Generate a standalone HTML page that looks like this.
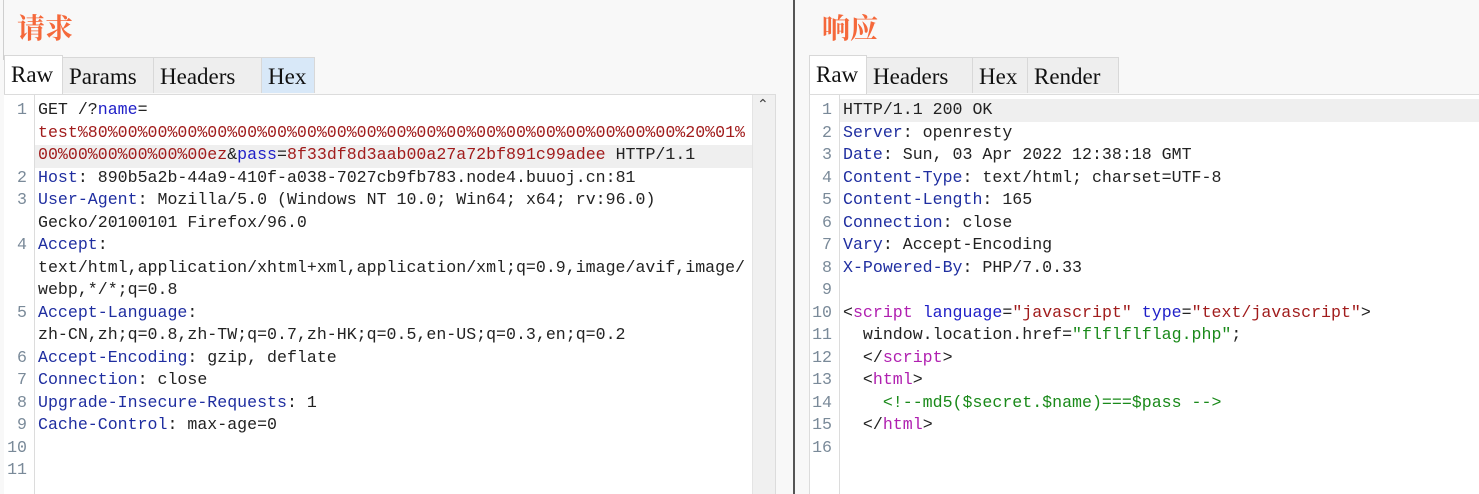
<!DOCTYPE html>
<html><head><meta charset="utf-8"><style>
*{margin:0;padding:0;box-sizing:border-box}
body{width:1479px;height:494px;background:#f8f8f8;position:relative;overflow:hidden;font-family:"Liberation Mono","Noto Sans CJK SC",monospace}
.abs{position:absolute}
.title{font-family:"Noto Serif CJK SC","Liberation Serif",serif;color:#f5683a;font-size:28px;line-height:30px;font-weight:bold}
.tab{position:absolute;top:57px;height:36px;border:1px solid #d8d8d8;border-bottom:none;background:#eeeeee;font-family:"Liberation Serif","Noto Serif CJK SC",serif;font-size:23px;line-height:38px;padding:0 6px;color:#111}
.tab.sel{background:#fff;top:55px;height:40px;line-height:38px}
.ed{position:absolute;background:#fff;border-top:1px solid #dcdcdc}
.ln{position:absolute;height:22.5px;font-size:16.6px;line-height:22.5px;white-space:pre;color:#222}
.num{position:absolute;font-size:16.6px;line-height:22.5px;color:#7a8a99;text-align:right;width:22px}
.k{color:#1f2ea0}.r{color:#a11c1c}.t{color:#b020b0}.a{color:#2020c8}.s{color:#a11c1c}.g{color:#1a8a1a}
</style></head><body>
<div class="abs" style="left:3px;top:0;width:1px;height:60px;background:#cfcfcf"></div>
<div class="abs title" style="left:17px;top:12px">请求</div>
<div class="abs title" style="left:822px;top:12px">响应</div>
<div class="abs" style="left:793px;top:0;width:2px;height:494px;background:#555"></div>

<div class="tab" style="left:62px;width:92px">Params</div>
<div class="tab" style="left:153px;width:109px">Headers</div>
<div class="tab" style="left:261px;width:54px;background:#d8e8f8">Hex</div>
<div class="tab sel" style="left:4px;width:59px;">Raw</div>

<div class="ed" style="left:4px;top:94px;width:772px;height:400px;border-right:1px solid #dcdcdc"></div>
<div class="abs" style="left:752px;top:95px;width:23px;height:399px;background:#f0f0f0;border-left:1px solid #e4e4e4"></div>
<div class="abs" style="left:757px;top:97px;font-size:14px;color:#444;font-family:'DejaVu Sans',sans-serif">&#8963;</div>
<div class="abs" style="left:34px;top:95px;width:1px;height:399px;background:#dcdcdc"></div>
<div class="abs" style="left:35px;top:145px;width:717px;height:22.5px;background:#efefef"></div>

<div class="num" style="left:5px;top:99px">1</div>
<div class="num" style="left:5px;top:166.5px">2</div>
<div class="num" style="left:5px;top:189px">3</div>
<div class="num" style="left:5px;top:234px">4</div>
<div class="num" style="left:5px;top:301.5px">5</div>
<div class="num" style="left:5px;top:346.5px">6</div>
<div class="num" style="left:5px;top:369px">7</div>
<div class="num" style="left:5px;top:391.5px">8</div>
<div class="num" style="left:5px;top:414px">9</div>
<div class="num" style="left:5px;top:436.5px">10</div>
<div class="num" style="left:5px;top:459px">11</div>

<div class="ln" style="left:38px;top:99px">GET /?<span class="a">name</span>=</div>
<div class="ln r" style="left:38px;top:121.5px">test%80%00%00%00%00%00%00%00%00%00%00%00%00%00%00%00%00%00%00%00%20%01%</div>
<div class="ln" style="left:38px;top:144px"><span class="r">00%00%00%00%00%00ez</span>&amp;<span class="a">pass</span>=<span class="r">8f33df8d3aab00a27a72bf891c99adee</span> HTTP/1.1</div>
<div class="ln" style="left:38px;top:166.5px"><span class="k">Host</span>: 890b5a2b-44a9-410f-a038-7027cb9fb783.node4.buuoj.cn:81</div>
<div class="ln" style="left:38px;top:189px"><span class="k">User-Agent</span>: Mozilla/5.0 (Windows NT 10.0; Win64; x64; rv:96.0)</div>
<div class="ln" style="left:38px;top:211.5px">Gecko/20100101 Firefox/96.0</div>
<div class="ln" style="left:38px;top:234px"><span class="k">Accept</span>:</div>
<div class="ln" style="left:38px;top:256.5px">text/html,application/xhtml+xml,application/xml;q=0.9,image/avif,image/</div>
<div class="ln" style="left:38px;top:279px">webp,*/*;q=0.8</div>
<div class="ln" style="left:38px;top:301.5px"><span class="k">Accept-Language</span>:</div>
<div class="ln" style="left:38px;top:324px">zh-CN,zh;q=0.8,zh-TW;q=0.7,zh-HK;q=0.5,en-US;q=0.3,en;q=0.2</div>
<div class="ln" style="left:38px;top:346.5px"><span class="k">Accept-Encoding</span>: gzip, deflate</div>
<div class="ln" style="left:38px;top:369px"><span class="k">Connection</span>: close</div>
<div class="ln" style="left:38px;top:391.5px"><span class="k">Upgrade-Insecure-Requests</span>: 1</div>
<div class="ln" style="left:38px;top:414px"><span class="k">Cache-Control</span>: max-age=0</div>

<div class="tab" style="left:866px;width:107px">Headers</div>
<div class="tab" style="left:972px;width:56px">Hex</div>
<div class="tab" style="left:1027px;width:92px">Render</div>
<div class="tab sel" style="left:809px;width:58px">Raw</div>
<div class="ed" style="left:809px;top:94px;width:670px;height:400px;border-left:1px solid #dcdcdc"></div>
<div class="abs" style="left:839px;top:95px;width:1px;height:399px;background:#dcdcdc"></div>
<div class="abs" style="left:840px;top:99px;width:639px;height:22.5px;background:#efefef"></div>

<div class="num" style="left:810px;top:99px">1</div>
<div class="num" style="left:810px;top:121.5px">2</div>
<div class="num" style="left:810px;top:144px">3</div>
<div class="num" style="left:810px;top:166.5px">4</div>
<div class="num" style="left:810px;top:189px">5</div>
<div class="num" style="left:810px;top:211.5px">6</div>
<div class="num" style="left:810px;top:234px">7</div>
<div class="num" style="left:810px;top:256.5px">8</div>
<div class="num" style="left:810px;top:279px">9</div>
<div class="num" style="left:810px;top:301.5px">10</div>
<div class="num" style="left:810px;top:324px">11</div>
<div class="num" style="left:810px;top:346.5px">12</div>
<div class="num" style="left:810px;top:369px">13</div>
<div class="num" style="left:810px;top:391.5px">14</div>
<div class="num" style="left:810px;top:414px">15</div>
<div class="num" style="left:810px;top:436.5px">16</div>

<div class="ln" style="left:843px;top:99px">HTTP/1.1 200 OK</div>
<div class="ln" style="left:843px;top:121.5px"><span class="k">Server</span>: openresty</div>
<div class="ln" style="left:843px;top:144px"><span class="k">Date</span>: Sun, 03 Apr 2022 12:38:18 GMT</div>
<div class="ln" style="left:843px;top:166.5px"><span class="k">Content-Type</span>: text/html; charset=UTF-8</div>
<div class="ln" style="left:843px;top:189px"><span class="k">Content-Length</span>: 165</div>
<div class="ln" style="left:843px;top:211.5px"><span class="k">Connection</span>: close</div>
<div class="ln" style="left:843px;top:234px"><span class="k">Vary</span>: Accept-Encoding</div>
<div class="ln" style="left:843px;top:256.5px"><span class="k">X-Powered-By</span>: PHP/7.0.33</div>
<div class="ln" style="left:843px;top:301.5px">&lt;<span class="t">script</span> <span class="a">language</span>=<span class="s">"javascript"</span> <span class="a">type</span>=<span class="s">"text/javascript"</span>&gt;</div>
<div class="ln" style="left:843px;top:324px">  window.location.href=<span class="g">"flflflflag.php"</span>;</div>
<div class="ln" style="left:843px;top:346.5px">  &lt;/<span class="t">script</span>&gt;</div>
<div class="ln" style="left:843px;top:369px">  &lt;<span class="t">html</span>&gt;</div>
<div class="ln g" style="left:843px;top:391.5px">    &lt;!--md5($secret.$name)===$pass --&gt;</div>
<div class="ln" style="left:843px;top:414px">  &lt;/<span class="t">html</span>&gt;</div>
</body></html>
